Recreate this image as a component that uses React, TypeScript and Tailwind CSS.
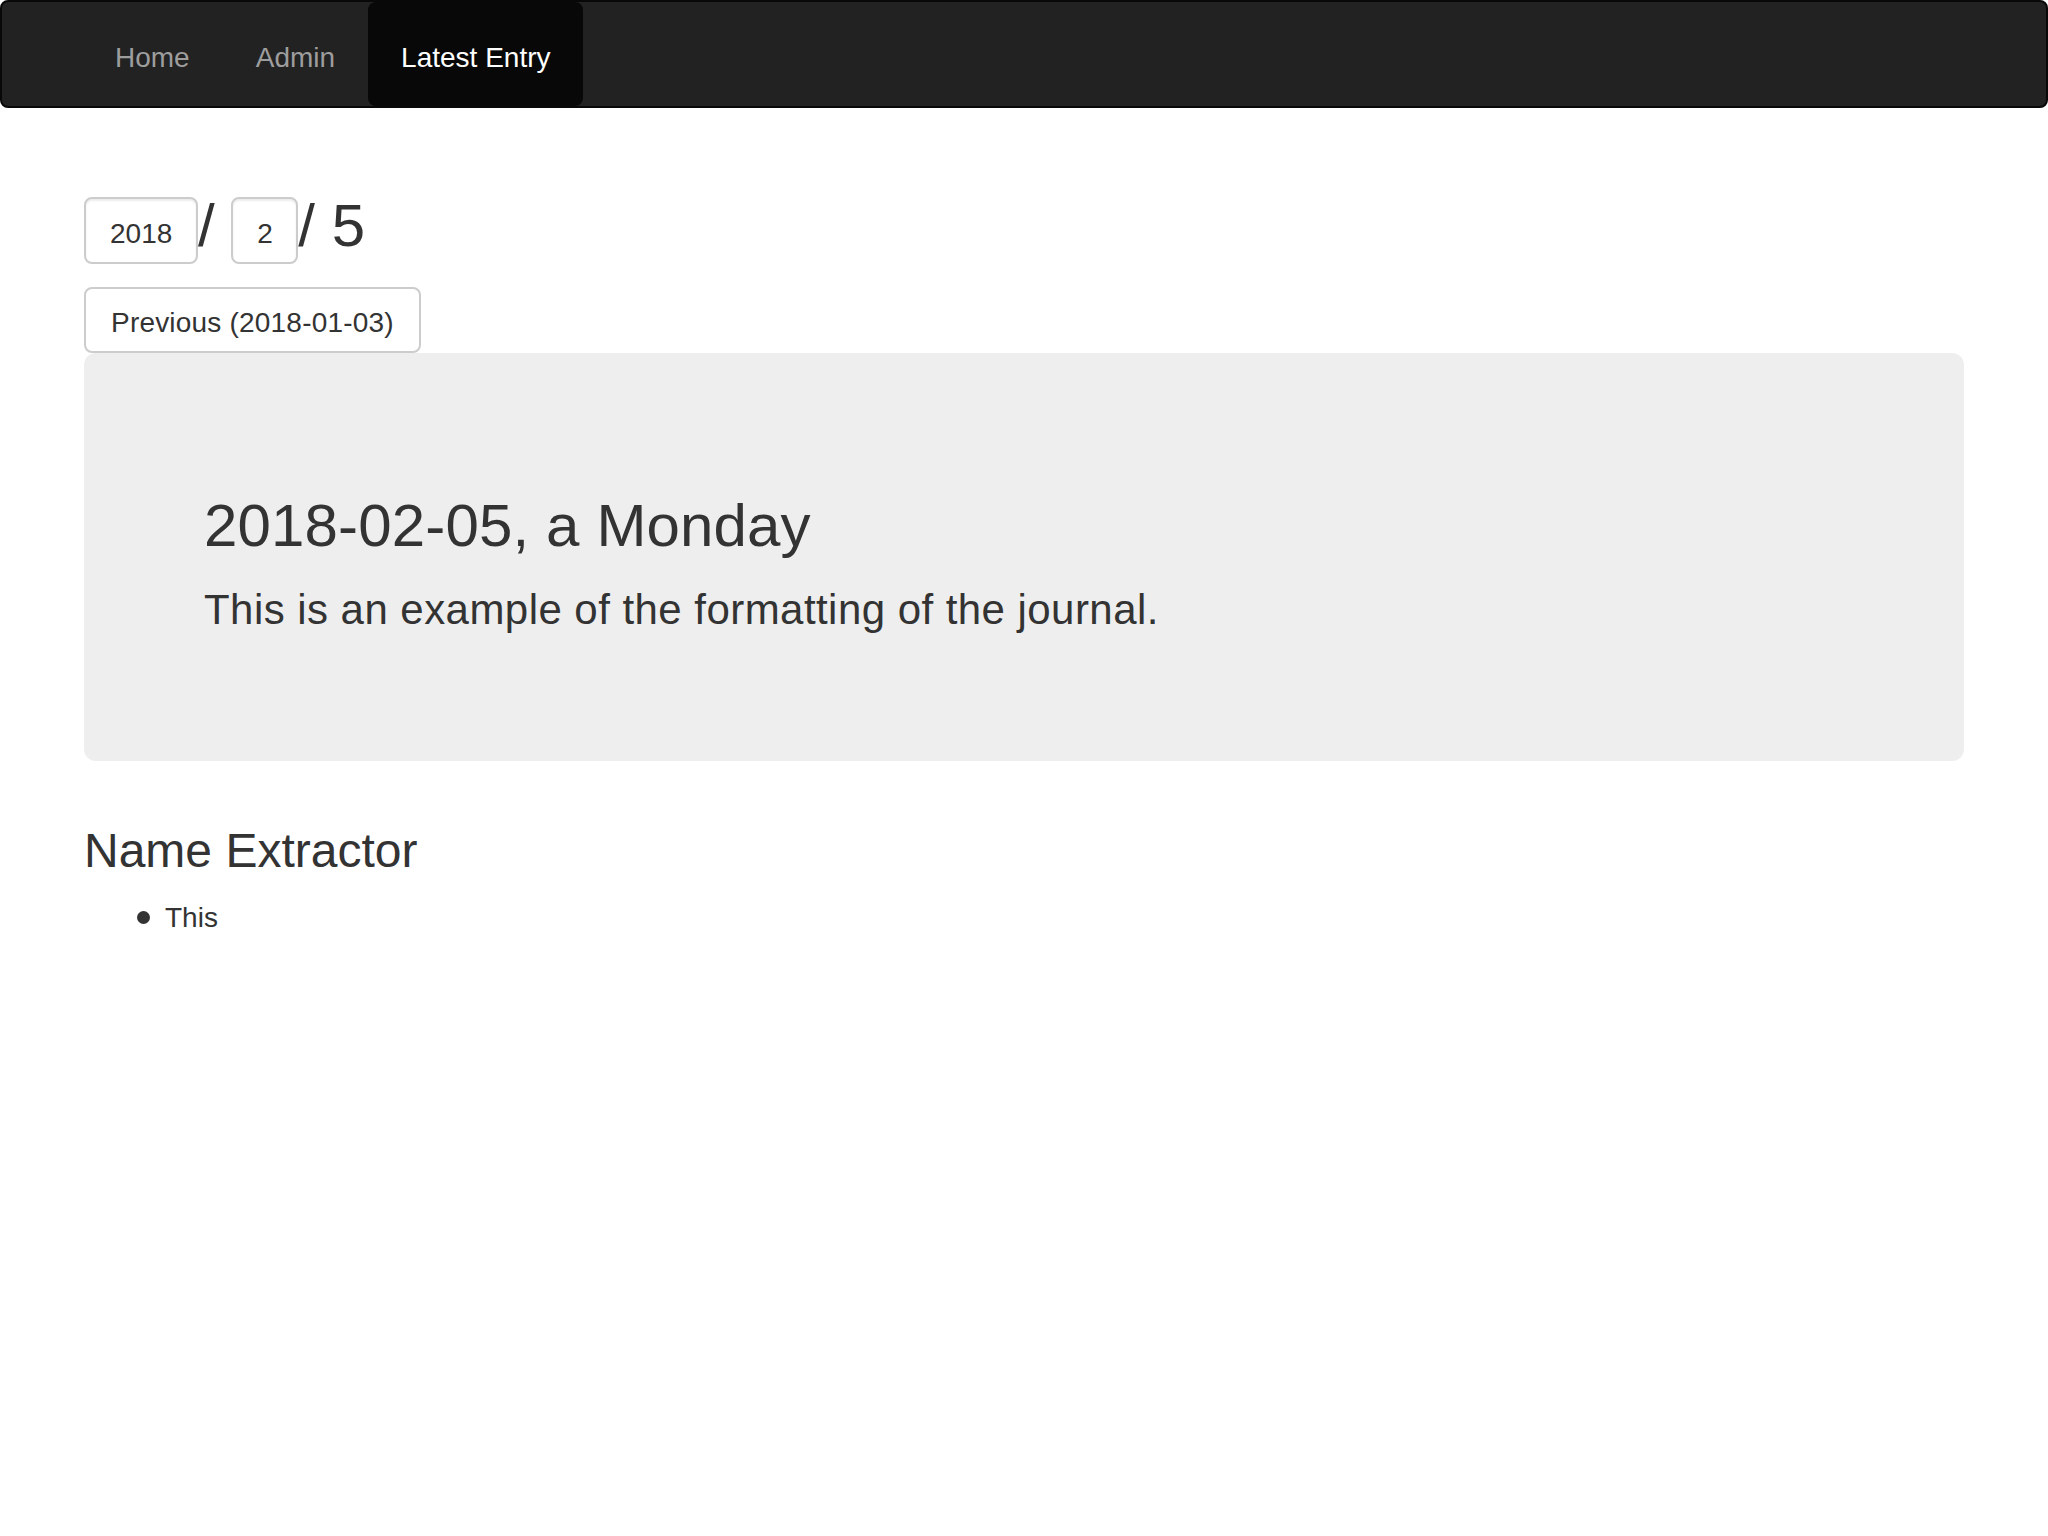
const NAV_LINKS = [
  { label: "Home", active: false },
  { label: "Admin", active: false },
  { label: "Latest Entry", active: true },
];

export default function App() {
  return (
    <div className="min-h-screen bg-white text-[#333] font-['Liberation_Sans',Arial,sans-serif]">
      {/* Navbar */}
      <nav className="h-[108px] bg-[#222] border-2 border-[#080808] rounded-[8px] pl-[80px]">
        <ul className="flex h-full">
          {NAV_LINKS.map((link) => (
            <li key={link.label} className="h-full">
              <a
                href="#"
                className={`block h-full px-[33px] pt-[36px] text-[28px] leading-[40px] ${
                  link.active ? "bg-[#080808] text-white rounded-[8px]" : "text-[#9d9d9d]"
                }`}
              >
                {link.label}
              </a>
            </li>
          ))}
        </ul>
      </nav>

      <main className="px-[84px] pt-[82px]">
        {/* Date picker */}
        <div className="flex items-start h-[74px] text-[60px] leading-[66px]">
          <input
            readOnly
            value="2018"
            className="mt-[7px] w-[114px] h-[67px] px-[24px] pt-[6px] border-2 border-[#ccc] rounded-[8px] text-[28px] text-[#333] shadow-[inset_0_2px_2px_rgba(0,0,0,0.075)] outline-none"
          />
          <span className="whitespace-pre pt-[3px]">/ </span>
          <input
            readOnly
            value="2"
            className="mt-[7px] w-[67px] h-[67px] px-[24px] pt-[6px] border-2 border-[#ccc] rounded-[8px] text-[28px] text-[#333] shadow-[inset_0_2px_2px_rgba(0,0,0,0.075)] outline-none"
          />
          <span className="whitespace-pre pt-[3px]">/ 5</span>
        </div>

        <button className="mt-[23px] h-[66px] px-[25px] pt-[5px] border-2 border-[#ccc] rounded-[8px] bg-white text-[28px] tracking-[0.2px] text-[#333]">
          Previous (2018-01-03)
        </button>

        {/* Jumbotron */}
        <div className="bg-[#eee] rounded-[12px] px-[120px] py-[96px]">
          <h2 className="mt-[44px] mb-[20px] text-[60px] leading-[1.1] tracking-[0.15px] font-normal">2018-02-05, a Monday</h2>
          <p className="pt-[1px] mb-[25px] text-[42px] leading-[60px] tracking-[0.45px]">
            This is an example of the formatting of the journal.
          </p>
        </div>

        <h3 className="mt-[64px] mb-[20px] text-[48px] leading-[1.1] font-normal">Name Extractor</h3>
        <ul className="pl-[53px] text-[28px] leading-[40px]">
          <li className="flex items-center">
            <span className="w-[13px] h-[13px] rounded-full bg-[#333] mr-[15px]" />
            This
          </li>
        </ul>
      </main>
    </div>
  );
}
